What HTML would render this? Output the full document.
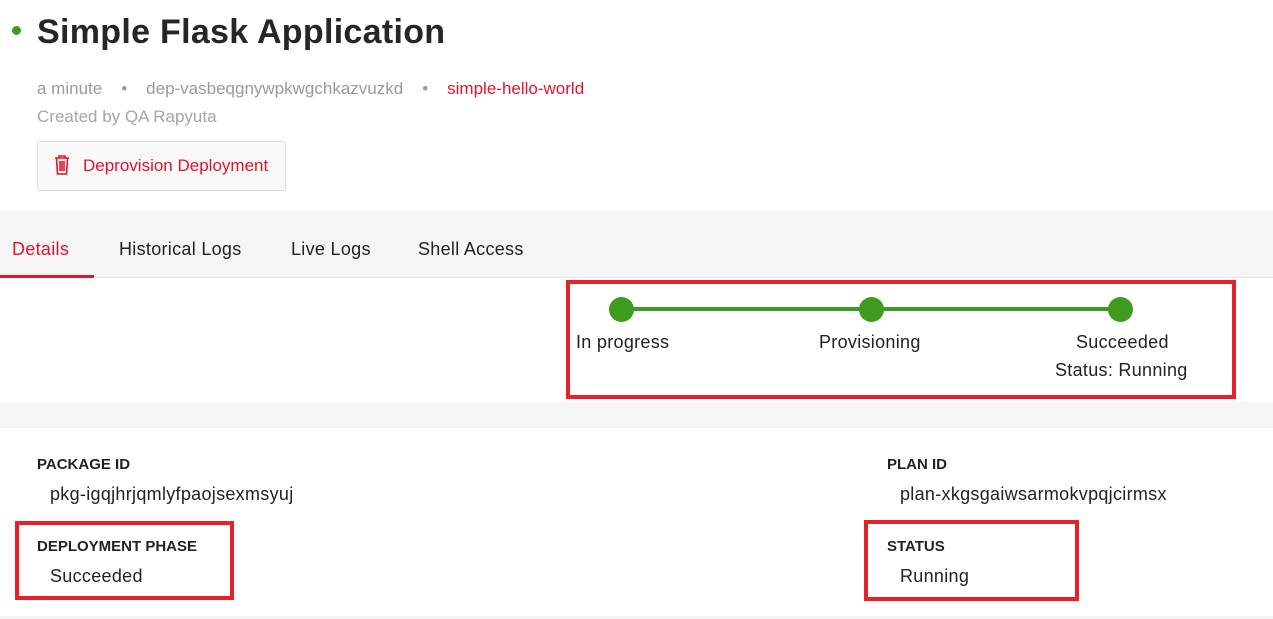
<!DOCTYPE html>
<html><head><style>
body{margin:0;width:1273px;height:619px;background:#fff;font-family:"Liberation Sans",sans-serif;position:relative;overflow:hidden;color:#222}
.a{position:absolute;white-space:nowrap}
.t{font-size:18px;letter-spacing:0.3px}
</style></head><body>
<div class="a" style="left:12px;top:26px;width:9px;height:9px;border-radius:50%;background:#3f9a20"></div>
<div class="a" style="left:37px;top:13px;font-size:34px;font-weight:bold;color:#262626;letter-spacing:0.3px">Simple Flask Application</div>
<div class="a" style="left:37px;top:79px;font-size:17px;color:#9a9a9a">a minute<span style="margin:0 19px 0 19px">•</span>dep-vasbeqgnywpkwgchkazvuzkd<span style="margin:0 19px">•</span><span style="color:#e0142c">simple-hello-world</span></div>
<div class="a" style="left:37px;top:107px;font-size:17px;color:#a5a5a5">Created by QA Rapyuta</div>
<div class="a" style="left:37px;top:141px;width:247px;height:48px;border:1px solid #ddd;border-radius:3px;background:#f9f9f9"></div>
<svg class="a" style="left:54px;top:155px" width="16" height="20" viewBox="0 0 16 20" fill="none" stroke="#e0142c" stroke-width="1.6"><path d="M1 3h14M5 3V1h6v2M2.5 3l1 16h9l1-16M6 6v10M8 6v10M10 6v10"/></svg>
<div class="a" style="left:83px;top:156px;font-size:17px;color:#e0142c">Deprovision Deployment</div>
<div class="a" style="left:0;top:210px;width:1273px;height:67px;background:#f5f5f5;border-bottom:1px solid #e6e6e6"></div>
<div class="a" style="left:0;top:275px;width:94px;height:3px;background:#e0142c"></div>
<div class="a t" style="left:12px;top:239px;color:#e0142c">Details</div>
<div class="a t" style="left:119px;top:239px">Historical Logs</div>
<div class="a t" style="left:291px;top:239px">Live Logs</div>
<div class="a t" style="left:418px;top:239px">Shell Access</div>
<div class="a" style="left:0;top:402px;width:1273px;height:26px;background:#f5f5f5"></div>
<div class="a" style="left:566px;top:280px;width:662px;height:111px;border:4px solid #e8202a"></div>
<div class="a" style="left:621px;top:307px;width:499px;height:4px;background:#3f9a20"></div>
<div class="a" style="left:609px;top:297px;width:25px;height:25px;border-radius:50%;background:#3f9a20"></div>
<div class="a" style="left:859px;top:297px;width:25px;height:25px;border-radius:50%;background:#3f9a20"></div>
<div class="a" style="left:1108px;top:297px;width:25px;height:25px;border-radius:50%;background:#3f9a20"></div>
<div class="a t" style="left:576px;top:332px">In progress</div>
<div class="a t" style="left:819px;top:332px">Provisioning</div>
<div class="a t" style="left:1076px;top:332px">Succeeded</div>
<div class="a t" style="left:1055px;top:360px">Status: Running</div>
<div class="a" style="left:37px;top:456px;font-size:15px;font-weight:bold">PACKAGE ID</div>
<div class="a t" style="left:50px;top:484px">pkg-igqjhrjqmlyfpaojsexmsyuj</div>
<div class="a" style="left:887px;top:456px;font-size:15px;font-weight:bold">PLAN ID</div>
<div class="a t" style="left:900px;top:484px">plan-xkgsgaiwsarmokvpqjcirmsx</div>
<div class="a" style="left:15px;top:521px;width:211px;height:71px;border:4px solid #e8202a"></div>
<div class="a" style="left:37px;top:538px;font-size:15px;font-weight:bold">DEPLOYMENT PHASE</div>
<div class="a t" style="left:50px;top:566px">Succeeded</div>
<div class="a" style="left:864px;top:520px;width:207px;height:73px;border:4px solid #e8202a"></div>
<div class="a" style="left:887px;top:538px;font-size:15px;font-weight:bold">STATUS</div>
<div class="a t" style="left:900px;top:566px">Running</div>
<div class="a" style="left:0;top:616px;width:1273px;height:3px;background:#f3f3f3"></div>
</body></html>
